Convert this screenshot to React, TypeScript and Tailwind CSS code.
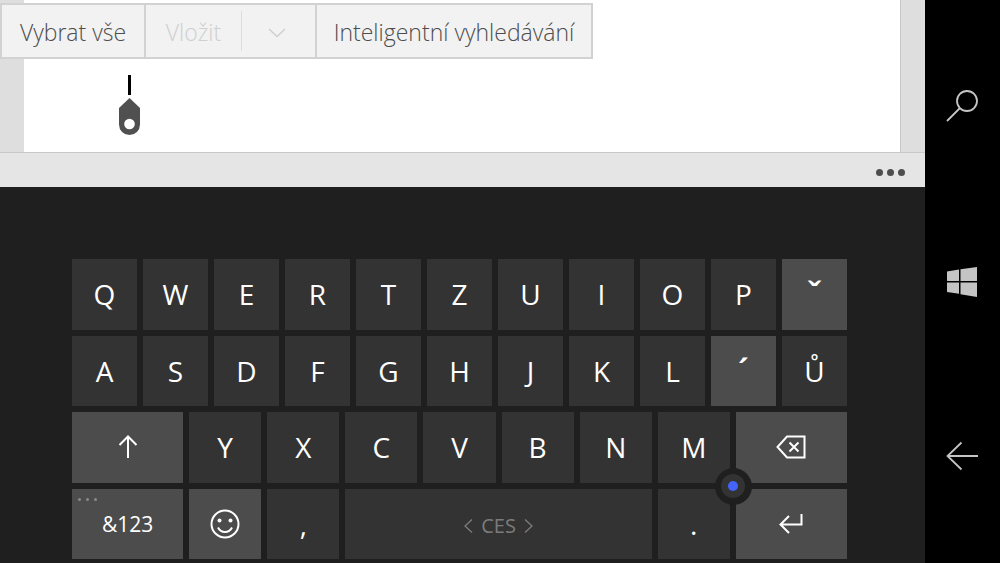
import React from "react";
import clsx from "clsx";

const firstRow = ["Q", "W", "E", "R", "T", "Z", "U", "I", "O", "P", "ˇ"];
const secondRow = ["A", "S", "D", "F", "G", "H", "J", "K", "L", "´", "Ů"];
const thirdRow = ["Y", "X", "C", "V", "B", "N", "M"];
const accents = ["ˇ", "´"];

type KeyProps = {
  children: React.ReactNode;
  label?: string;
  light?: boolean;
  text?: string;
  className?: string;
};

function Key({
  children,
  label,
  light,
  text = "text-[28px] text-white",
  className,
}: KeyProps) {
  return (
    <button
      type="button"
      aria-label={label}
      className={clsx(
        "flex items-center justify-center leading-8",
        light ? "bg-[#4c4c4c]" : "bg-[#333333]",
        text,
        className
      )}
    >
      {children}
    </button>
  );
}

function ContextMenu() {
  return (
    <div className="absolute top-[3px] left-0 flex h-14 border-2 border-[#d2d2d2] bg-[#f2f2f2] text-[23px] leading-8 font-light text-[#4d4d4d]">
      <button type="button" className="w-36 border-r-2 border-[#d2d2d2] pt-[2px]">
        Vybrat vše
      </button>
      <div className="flex w-[171px] items-center border-r-2 border-[#d2d2d2] text-[#cfcfcf]">
        <button type="button" disabled className="flex-1 pt-[2px]">
          Vložit
        </button>
        <button
          type="button"
          disabled
          aria-label="Možnosti vložení"
          className="flex h-10 w-[74px] items-center justify-center border-l border-[#dcdcdc] pt-1 pr-[3px]"
        >
          <svg width="18" height="10" viewBox="0 0 18 10" fill="none" stroke="currentColor" strokeWidth="1.500">
            <path d="M1 1l8 7.500 8-7.500" />
          </svg>
        </button>
      </div>
      <button type="button" className="w-[274px] pt-[2px]">
        Inteligentní vyhledávání
      </button>
    </div>
  );
}

function Editor() {
  return (
    <main className="relative flex h-[152px] bg-[#dedede] pr-6 pl-6">
      <div className="flex-1 border-r border-[#c8c8c8] bg-white pt-[75px] pl-[95px]">
        {/* caret and its drag handle */}
        <div className="flex w-[21px] flex-col items-center gap-[3px]">
          <div className="h-5 w-[3px] bg-black" />
          <svg width="21" height="37" viewBox="0 0 21 37">
            <path d="M10.500 0L21 10v16.500a10.500 10.500 0 0 1-21 0V10z" fill="#505050" />
            <circle cx="10.500" cy="26" r="5.300" fill="#fff" />
          </svg>
        </div>
      </div>
      <ContextMenu />
    </main>
  );
}

function AppBar() {
  return (
    <div className="flex h-[35px] items-center justify-end border-t border-[#c8c8c8] bg-[#e5e5e5] pt-1 pr-5">
      <button type="button" aria-label="Více" className="flex gap-1 text-[#4d4d4d]">
        <span className="size-[7px] rounded-full bg-current" />
        <span className="size-[7px] rounded-full bg-current" />
        <span className="size-[7px] rounded-full bg-current" />
      </button>
    </div>
  );
}

function Keyboard() {
  return (
    <section className="flex-1 bg-[#1f1f1f] pt-[72px] pr-[78px] pb-1 pl-[72px]">
      <div className="grid h-[300px] grid-rows-4 gap-[6px]">
        {[firstRow, secondRow].map((row) => (
          <div key={row[0]} className="grid grid-cols-11 gap-[6px]">
            {row.map((k) =>
              accents.includes(k) ? (
                <Key key={k} light text="text-[34px] font-semibold text-white">
                  {k}
                </Key>
              ) : (
                <Key key={k}>{k}</Key>
              )
            )}
          </div>
        ))}

        <div className="grid grid-cols-[111fr_repeat(7,72fr)_111fr] gap-[6px]">
          <Key light label="Shift">
            <svg width="20" height="24" viewBox="0 0 20 24" fill="none" stroke="currentColor" strokeWidth="2">
              <path d="M10 23V2M1.500 10L10 1.500 18.500 10" />
            </svg>
          </Key>
          {thirdRow.map((k) => (
            <Key key={k}>{k}</Key>
          ))}
          <div className="relative grid">
            <Key light label="Backspace">
              <svg width="30" height="24" viewBox="0 0 30 24" fill="none" stroke="currentColor" strokeWidth="2">
                <path d="M11 1.500h17.500v21H11L1.500 12z" />
                <path d="M13.500 7.500l9 9M22.500 7.500l-9 9" />
              </svg>
            </Key>
            {/* cursor nub */}
            <div className="absolute -bottom-[22px] -left-[21px] z-10 flex size-[37px] items-center justify-center rounded-full bg-[#1f1f1f]">
              <span className="flex size-6 items-center justify-center rounded-full bg-[#333333]">
                <span className="size-[10px] rounded-full bg-[#4464ff]" />
              </span>
            </div>
          </div>
        </div>

        <div className="grid grid-cols-[111fr_repeat(7,72fr)_111fr] gap-[6px]">
          <div className="relative grid">
            <Key light text="text-[21px] text-white">
              &amp;123
            </Key>
            <div className="absolute top-[9px] left-[6px] flex gap-[5px]">
              <span className="size-[3px] rounded-full bg-[#8a8a8a]" />
              <span className="size-[3px] rounded-full bg-[#8a8a8a]" />
              <span className="size-[3px] rounded-full bg-[#8a8a8a]" />
            </div>
          </div>
          <Key light label="Emoji">
            <svg width="30" height="30" viewBox="0 0 30 30" fill="none" stroke="currentColor" strokeWidth="2">
              <circle cx="15" cy="15" r="13.500" />
              <path d="M8 18.500c3 6 11 6 14 0" />
              <circle cx="9.500" cy="11.500" r="2" fill="currentColor" stroke="none" />
              <circle cx="20.500" cy="11.500" r="2" fill="currentColor" stroke="none" />
            </svg>
          </Key>
          <Key>,</Key>
          <Key
            label="Mezerník CES"
            text="text-[20px] text-[#7c7c7c]"
            className="col-span-4 gap-2 pt-1"
          >
            <svg width="9" height="14" viewBox="0 0 9 14" fill="none" stroke="currentColor" strokeWidth="1.300">
              <path d="M8 0.500L1 7l7 6.500" />
            </svg>
            CES
            <svg width="9" height="14" viewBox="0 0 9 14" fill="none" stroke="currentColor" strokeWidth="1.300">
              <path d="M1 0.500L8 7l-7 6.500" />
            </svg>
          </Key>
          <Key>.</Key>
          <Key light label="Enter">
            <svg width="24" height="20" viewBox="0 0 24 20" fill="none" stroke="currentColor" strokeWidth="2">
              <path d="M22.500 0v10.500H2M10 2L1.500 10.500 10 19" />
            </svg>
          </Key>
        </div>
      </div>
    </section>
  );
}

function NavigationBar() {
  return (
    <nav className="flex w-[75px] flex-col items-center justify-between bg-black pt-[90px] pr-[2px] pb-[92px] text-[#c4c4c4]">
      <button type="button" aria-label="Hledat">
        <svg width="32" height="32" viewBox="0 0 32 32" fill="none" stroke="currentColor" strokeWidth="1.800">
          <circle cx="21" cy="11" r="10" />
          <path d="M14 18L1 31" />
        </svg>
      </button>
      <button type="button" aria-label="Start">
        <svg width="30" height="30" viewBox="0 0 30 30" fill="currentColor">
          <path d="M0 4.500l12-2v11.500H0zM13.500 2.200L30 0v14H13.500zM0 15.500h12v11.300L0 25zM13.500 15.500H30V30l-16.500-2.700z" />
        </svg>
      </button>
      <button type="button" aria-label="Zpět">
        <svg width="32" height="30" viewBox="0 0 32 30" fill="none" stroke="currentColor" strokeWidth="1.800">
          <path d="M32 15H2M15.500 1.500L1.500 15l14 13.500" />
        </svg>
      </button>
    </nav>
  );
}

function App() {
  return (
    <div className="flex min-h-screen font-['Open_Sans','Noto_Sans',sans-serif]">
      <div className="flex flex-1 flex-col">
        <Editor />
        <AppBar />
        <Keyboard />
      </div>
      <NavigationBar />
    </div>
  );
}

export default App;
